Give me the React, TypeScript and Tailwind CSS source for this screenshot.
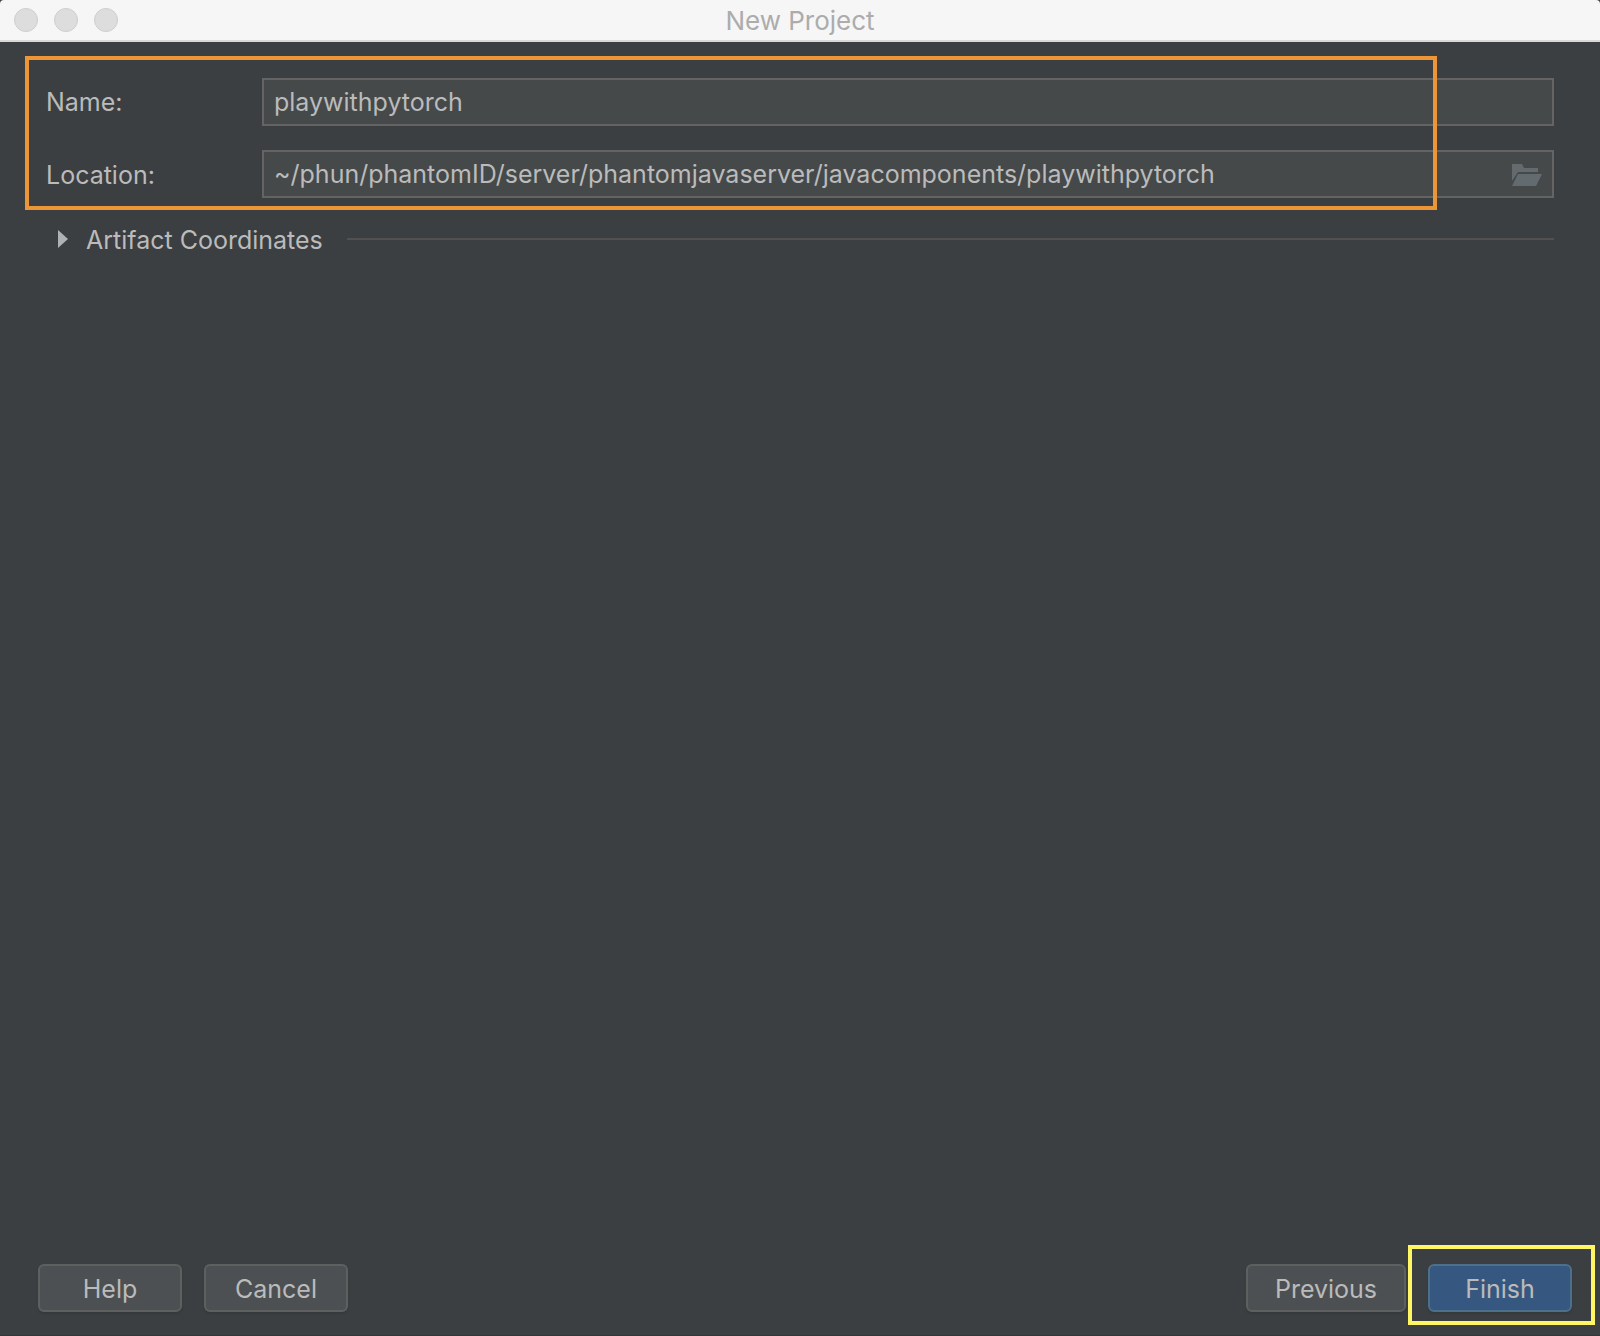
import { useState, type ReactNode } from "react";

const fieldClass =
  "h-12 w-full border-2 border-[#646464] bg-[#45494a] px-2.5 text-[25px] text-[#bbbbbb] outline-none";

function TitleBar() {
  return (
    <header className="grid h-[42px] grid-cols-[1fr_auto_1fr] items-center rounded-t-sm border-b-2 border-[#d8d8d8] bg-[#f6f6f6] px-3.5">
      <div className="flex gap-4">
        {["Close", "Minimize", "Zoom"].map((name) => (
          <button
            key={name}
            type="button"
            aria-label={name}
            className="size-6 rounded-full border border-[#cecece] bg-[#dddddd]"
          />
        ))}
      </div>
      <h1 className="pt-0.5 text-[26px] leading-8 text-[#acacac]">New Project</h1>
    </header>
  );
}

function FolderIcon() {
  return (
    <svg viewBox="0 0 30 22" className="h-[22px] w-[30px]" fill="#646b6f" aria-hidden="true">
      <path d="M0 0h10l2 4h14v4H6L0 17z" />
      <path d="M6 10h24l-6 12H0z" />
    </svg>
  );
}

function DialogButton({ children, primary = false, wide = false }: { children: ReactNode; primary?: boolean; wide?: boolean }) {
  return (
    <button
      type="button"
      className={`h-12 rounded-md border-2 pt-1 text-[25px] text-[#bbbbbb] shadow-[0_2px_2px_#36393b] ${wide ? "w-40" : "w-36"} ${
        primary ? "border-[#4c708c] bg-[#365880]" : "border-[#5e6060] bg-[#4c5052]"
      }`}
    >
      {children}
    </button>
  );
}

export default function App() {
  const [name, setName] = useState("playwithpytorch");
  const [location, setLocation] = useState(
    "~/phun/phantomID/server/phantomjavaserver/javacomponents/playwithpytorch",
  );

  return (
    <div className="flex min-h-screen flex-col bg-[#3c3f41] font-['Inter',sans-serif] text-[25px] text-[#bbbbbb]">
      <TitleBar />
      <main className="flex-1 px-[46px] pt-9">
        <form className="relative grid grid-cols-[216px_1fr] items-center gap-y-6">
          <label htmlFor="name" className="pt-0.5">Name:</label>
          <input id="name" className={fieldClass} value={name} onChange={(e) => setName(e.target.value)} />
          <label htmlFor="location" className="pt-1">Location:</label>
          <div className="relative">
            <input
              id="location"
              className={fieldClass}
              value={location}
              onChange={(e) => setLocation(e.target.value)}
            />
            <button type="button" aria-label="Browse" className="absolute inset-y-0 right-3 flex items-center pt-0.5">
              <FolderIcon />
            </button>
          </div>
          <div className="pointer-events-none absolute -top-[22px] right-[117px] -bottom-3 -left-[21px] border-4 border-[#ed9637]" />
        </form>
        <button type="button" aria-expanded="false" className="mt-6 flex w-full items-center pl-3 text-left">
          <svg viewBox="0 0 10 18" className="h-[18px] w-2.5" fill="#afb1b3" aria-hidden="true">
            <path d="M0 0L10 9L0 18z" />
          </svg>
          <span className="ml-[18px] pt-0.5 leading-8">Artifact Coordinates</span>
          <span className="ml-6 h-0.5 flex-1 bg-[#515151]" />
        </button>
      </main>
      <footer className="flex items-center justify-between border-b border-[#333638] pr-7 pb-[23px] pl-[38px]">
        <div className="flex gap-[22px]">
          <DialogButton>Help</DialogButton>
          <DialogButton>Cancel</DialogButton>
        </div>
        <div className="flex gap-[22px]">
          <DialogButton wide>Previous</DialogButton>
          <div className="relative flex">
            <DialogButton primary>Finish</DialogButton>
            <div className="pointer-events-none absolute -top-[19px] -right-[23px] -bottom-[13px] -left-5 border-4 border-[#fef763]" />
          </div>
        </div>
      </footer>
    </div>
  );
}
